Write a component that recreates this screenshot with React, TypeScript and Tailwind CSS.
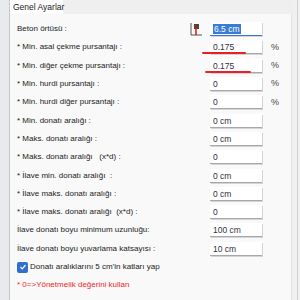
const rows: { label: string; value: string; pct?: boolean; mark?: string; icon?: boolean; active?: boolean }[] = [
  { label: "Beton örtüsü :", value: "6.5 cm", icon: true, active: true },
  { label: "* Min. asal çekme pursantajı :", value: "0.175", pct: true, mark: "left-[-8px] w-[44px]" },
  { label: "* Min. diğer çekme pursantajı :", value: "0.175", pct: true, mark: "left-[-5px] w-[46px]" },
  { label: "* Min. hurdi pursantajı :", value: "0", pct: true },
  { label: "* Min. hurdi diğer pursantajı :", value: "0", pct: true },
  { label: "* Min. donatı aralığı :", value: "0 cm" },
  { label: "* Maks. donatı aralığı :", value: "0 cm" },
  { label: "* Maks. donatı aralığı\u00a0\u00a0\u00a0(x*d) :", value: "0" },
  { label: "* İlave min. donatı aralığı\u00a0\u00a0:", value: "0 cm" },
  { label: "* İlave maks. donatı aralığı :", value: "0 cm" },
  { label: "* İlave maks. donatı aralığı\u00a0\u00a0(x*d) :", value: "0" },
  { label: "İlave donatı boyu minimum uzunluğu:", value: "100 cm" },
  { label: "İlave donatı boyu yuvarlama katsayısı :", value: "10 cm" },
];

function CoverIcon() {
  return (
    <svg width="12" height="14" viewBox="0 0 12 14">
      <path d="M1 1 V13 H12" stroke="#555" strokeWidth="1" fill="none" />
      <rect x="4" y="2" width="5" height="5" fill="#2f4f3a" />
      <path d="M6 4 V13" stroke="#e01010" strokeWidth="1.5" />
      <path d="M4.5 5.5 L6 3.5 L7.5 5.5" stroke="#e01010" strokeWidth="1" fill="none" />
    </svg>
  );
}

export default function App() {
  return (
    <div className="w-[300px] h-[300px] flex bg-[#f0f0f0] text-[8px] text-[#222] overflow-hidden" style={{ fontFamily: '"Liberation Sans", Arial, sans-serif' }}>
      <div className="w-[10px] bg-[#e8eaed] border-r border-[#c4c8cc]" />
      <div className="w-[282px] flex flex-col">
        <div className="h-[14px] flex bg-[#efefef]">
          <div className="w-[53px] bg-white pl-[3px] whitespace-nowrap leading-[14px] text-[8.5px] text-[#222]">Genel Ayarlar</div>
        </div>
        <div className="flex-1 bg-[#f9f9f9] border-r border-[#e4e4e4] pt-[6px] pl-[7px]">
          {rows.map((r) => (
            <div key={r.label} className="h-[18.3px] flex items-center">
              <span className="w-[173px] whitespace-nowrap">{r.label}</span>
              <span className="w-[20px] flex justify-start">{r.icon ? <CoverIcon /> : null}</span>
              <span className="relative">
                <span
                  className={
                    "block w-[52px] h-[14px] bg-white pl-[3px] leading-[14px] text-[8.5px] text-[#303040] shadow-[1px_1px_0_#d4d4d4] border-b " +
                    (r.active ? "border-[#3a78d0]" : "border-[#a8a8a8]")
                  }
                >
                  {r.active ? <span className="bg-[#3a7bd5] text-white px-[1px]">{r.value}</span> : r.value}
                </span>
                {r.mark ? <span className={"absolute top-[12px] h-[2px] bg-[#e8202a] rounded-full " + r.mark} /> : null}
              </span>
              <span className="pl-[9px] text-[9px] text-[#444]">{r.pct ? "%" : ""}</span>
            </div>
          ))}
          <div className="h-[18.3px] flex items-center gap-[2px]">
            <span className="w-[11px] h-[11px] rounded-[2px] bg-[#2e6fcf] flex items-center justify-center">
              <svg width="8" height="8" viewBox="0 0 8 8">
                <path d="M1.5 4 L3.3 5.8 L6.5 2" stroke="white" strokeWidth="1.2" fill="none" />
              </svg>
            </span>
            <span className="text-[#222]">Donatı aralıklarını 5 cm'in katları yap</span>
          </div>
          <div className="h-[18.3px] flex items-center text-[#f02828]">* 0=&gt;Yönetmelik değerini kullan</div>
        </div>
      </div>
      <div className="w-[6px] bg-[#f0f0f0] border-r border-[#d4d4d4]" />
    </div>
  );
}
